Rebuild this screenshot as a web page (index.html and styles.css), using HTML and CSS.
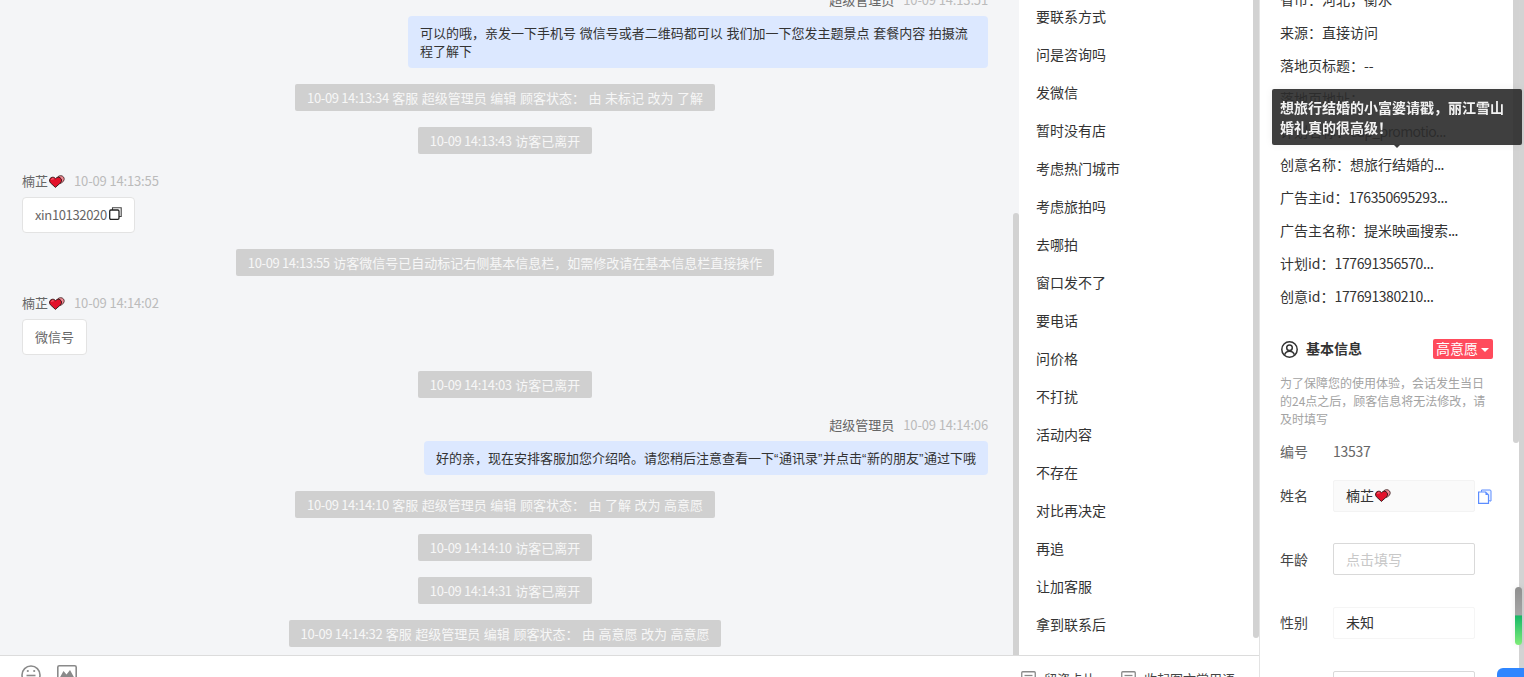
FILE: index.html
```html
<!DOCTYPE html>
<html lang="zh-CN">
<head>
<meta charset="utf-8">
<title>会话详情</title>
<link rel="stylesheet" href="styles.css">
</head>
<body>
<svg class="defs" width="0" height="0" aria-hidden="true">
  <symbol id="heart" viewBox="0 0 16 13">
    <path d="M8 3C9 .9 11.300 .2 13.200 1c2 .9 2.600 3.200 1.300 5L12 8.500 8 6z" fill="#f08a94" stroke="#4a2a2a" stroke-width=".9"/>
    <path d="M6.400 12.400 1.400 7.800C-.1 6 .4 3.500 2.200 2.600c1.600-.8 3.400-.3 4.400 1.100C7.600 2.300 9.400 1.800 11 2.700c1.800 1 2.100 3.500.6 5.100z" fill="#e3122b" stroke="#2e1616" stroke-width=".9"/>
    <path d="M2.500 4.500c.6-.7 1.400-.8 2.100-.6" fill="none" stroke="#f7a0a8" stroke-width=".9"/>
  </symbol>
</svg>
<div class="app">
  <div class="left">
    <div class="top">
      <section class="chat">
        <div class="feed">
          <div class="msg right">
            <div class="who"><span class="name">超级管理员</span><span class="time">10-09 14:13:51</span></div>
            <div class="bubble">可以的哦，亲发一下手机号 微信号或者二维码都可以 我们加一下您发主题景点 套餐内容 拍摄流程了解下</div>
          </div>
          <div class="notice"><span class="num">10-09 14:13:34</span> 客服 超级管理员 编辑 顾客状态： 由 未标记 改为 了解</div>
          <div class="notice"><span class="num">10-09 14:13:43</span> 访客已离开</div>
          <div class="msg">
            <div class="who"><span class="name">楠芷<svg class="heart"><use href="#heart"/></svg></span><span class="time">10-09 14:13:55</span></div>
            <div class="card"><span class="num">xin10132020</span><svg class="dup" viewBox="0 0 13 13"><path d="M3.500 3V.8h8.700v8.700H10" fill="none" stroke="#444" stroke-width="1.100"/><rect x=".7" y="3" width="9.300" height="9.300" rx="1.200" fill="none" stroke="#222" stroke-width="1.300"/></svg></div>
          </div>
          <div class="notice"><span class="num">10-09 14:13:55</span> 访客微信号已自动标记右侧基本信息栏，如需修改请在基本信息栏直接操作</div>
          <div class="msg">
            <div class="who"><span class="name">楠芷<svg class="heart"><use href="#heart"/></svg></span><span class="time">10-09 14:14:02</span></div>
            <div class="card">微信号</div>
          </div>
          <div class="notice"><span class="num">10-09 14:14:03</span> 访客已离开</div>
          <div class="msg right">
            <div class="who"><span class="name">超级管理员</span><span class="time">10-09 14:14:06</span></div>
            <div class="bubble">好的亲，现在安排客服加您介绍哈。请您稍后注意查看一下<span class="q">“</span>通讯录<span class="q">”</span>并点击<span class="q">“</span>新的朋友<span class="q">”</span>通过下哦</div>
          </div>
          <div class="notice"><span class="num">10-09 14:14:10</span> 客服 超级管理员 编辑 顾客状态： 由 了解 改为 高意愿</div>
          <div class="notice"><span class="num">10-09 14:14:10</span> 访客已离开</div>
          <div class="notice"><span class="num">10-09 14:14:31</span> 访客已离开</div>
          <div class="notice"><span class="num">10-09 14:14:32</span> 客服 超级管理员 编辑 顾客状态： 由 高意愿 改为 高意愿</div>
        </div>
        <div class="bar bar-chat"></div>
      </section>
      <aside class="phrases">
        <ul class="phrase-list">
          <li>要联系方式</li><li>问是咨询吗</li><li>发微信</li><li>暂时没有店</li><li>考虑热门城市</li><li>考虑旅拍吗</li><li>去哪拍</li><li>窗口发不了</li><li>要电话</li><li>问价格</li><li>不打扰</li><li>活动内容</li><li>不存在</li><li>对比再决定</li><li>再追</li><li>让加客服</li><li>拿到联系后</li>
        </ul>
        <div class="bar bar-phrases"></div>
      </aside>
    </div>
    <footer class="tools">
      <div class="tools-left">
        <svg class="tool-ico" viewBox="0 0 20 20"><circle cx="10" cy="10" r="9" fill="none" stroke="#8a8a8a" stroke-width="1.600"/><circle cx="6.800" cy="6" r="1.100" fill="#8a8a8a"/><circle cx="13.200" cy="6" r="1.100" fill="#8a8a8a"/><path d="M5.500 10.500h9" stroke="#8a8a8a" stroke-width="1.600"/></svg>
        <svg class="tool-ico" viewBox="0 0 20 20"><rect x=".8" y=".8" width="18.400" height="18.400" rx="1.500" fill="none" stroke="#8a8a8a" stroke-width="1.600"/><path d="M2 14l4.500-8 3 3.500L13 5l5 9z" fill="#8a8a8a"/></svg>
      </div>
      <div class="tools-right">
        <span class="tool-link"><svg class="tool-box" viewBox="0 0 15 15"><rect x=".75" y=".75" width="13.500" height="13.500" rx="1" fill="none" stroke="#8a8a8a" stroke-width="1.300"/><path d="M3.500 4.500h8" stroke="#8a8a8a" stroke-width="1.300"/></svg>留资卡片</span>
        <span class="tool-link"><svg class="tool-box" viewBox="0 0 15 15"><rect x=".75" y=".75" width="13.500" height="13.500" rx="1" fill="none" stroke="#8a8a8a" stroke-width="1.300"/><path d="M3.500 4.500h8" stroke="#8a8a8a" stroke-width="1.300"/></svg>收起图文常用语</span>
      </div>
    </footer>
  </div>
  <aside class="info">
    <div class="info-scroll">
      <ul class="facts">
        <li>省市：河北，衡水</li>
        <li>来源：直接访问</li>
        <li>落地页标题：--</li>
        <li>落地页地址：</li>
        <li>计划名称：<span class="latin">cdp_promotio...</span></li>
        <li>创意名称：想旅行结婚的<span class="dots">...</span></li>
        <li>广告主id：<span class="digits">176350695293...</span></li>
        <li>广告主名称：提米映画搜索<span class="dots">...</span></li>
        <li>计划id：<span class="digits">177691356570...</span></li>
        <li>创意id：<span class="digits">177691380210...</span></li>
      </ul>
      <div class="head">
        <svg class="head-ico" viewBox="0 0 17 17"><circle cx="8.500" cy="8.500" r="7.700" fill="none" stroke="#333" stroke-width="1.500"/><circle cx="8.500" cy="6.700" r="2.800" fill="none" stroke="#333" stroke-width="1.500"/><path d="M3.600 13.800c.8-2.400 2.700-3.500 4.900-3.500s4.100 1.100 4.900 3.500" fill="none" stroke="#333" stroke-width="1.500"/></svg>
        <h2 class="head-title">基本信息</h2>
        <span class="tag">高意愿<i class="caret"></i></span>
      </div>
      <p class="note">为了保障您的使用体验，会话发生当日的24点之后，顾客信息将无法修改，请及时填写</p>
      <div class="field plain"><span class="label">编号</span><span class="plain-val">13537</span></div>
      <div class="field tight"><span class="label dark">姓名</span><div class="input locked">楠芷<svg class="heart"><use href="#heart"/></svg></div>
        <svg class="copy" viewBox="0 0 14 15"><path d="M3.500 2.500V1H12c.6 0 1 .4 1 1v10h-1.500z" fill="#eef3ff" stroke="#5c8dff"/><path d="M.6 3h6.900l3 3v8.400H.6z" fill="#fff" stroke="#5c8dff" stroke-width="1.200"/><path d="M7.500 3v3h3z" fill="#5c8dff"/></svg>
      </div>
      <div class="field"><span class="label dark low">年龄</span><div class="input empty">点击填写</div></div>
      <div class="field"><span class="label dark">性别</span><div class="input soft">未知</div></div>
      <div class="field"><span class="label dark"></span><div class="input empty"></div></div>
    </div>
    <div class="bar bar-info"></div>
    <div class="tip">想旅行结婚的小富婆请戳，丽江雪山婚礼真的很高级！</div>
    <div class="meter"></div>
    <div class="fab"></div>
  </aside>
  <div class="edge"></div>
</div>
</body>
</html>
```
FILE: styles.css
```css
* { box-sizing: border-box; }
html, body { margin: 0; height: 100%; overflow: hidden; }
body { font: 13px/18px "Noto Sans CJK SC", "Noto Sans", sans-serif; color: #333; background: #fff; word-spacing: .8px; }
.defs { position: absolute; }
.app { display: flex; height: 677px; overflow: hidden; }
.left { width: 1259px; flex: none; display: flex; flex-direction: column; }
.top { flex: none; height: 655px; display: flex; }
.chat { width: 1019px; flex: none; position: relative; overflow: hidden; background: #f4f5f7; }
.feed { display: flex; flex-direction: column; align-items: center; gap: 16px; margin-top: -11px; padding: 0 31px 0 22px; }
.msg { align-self: stretch; display: flex; flex-direction: column; align-items: flex-start; gap: 5px; }
.msg.right { align-items: flex-end; }
.who { height: 22px; display: flex; align-items: center; gap: 9px; }
.name { color: #666; display: flex; align-items: center; }
.time { color: #bbb; letter-spacing: -.15px; word-spacing: 0; }
.num { letter-spacing: -.36px; word-spacing: 0; }
.heart { width: 16px; height: 13px; margin-left: 1px; flex: none; }
.q { font-family: "Liberation Sans", sans-serif; letter-spacing: .67px; line-height: 0; }
.bubble { max-width: 580px; padding: 8px 12px; background: #dce8ff; border-radius: 4px; color: #333; }
.card { height: 36px; display: flex; align-items: center; padding: 0 12px; background: #fff; border: 1px solid #e3e3e3; border-radius: 4px; color: #666; }
.dup { width: 13px; height: 13px; margin: -3px 0 0 2px; }
.notice { height: 27px; line-height: 27px; padding: 0 12px; background: #d0d0d0; border-radius: 2px; color: #f7f7f7; white-space: nowrap; word-spacing: .6px; }
.phrases { width: 240px; flex: none; position: relative; overflow: hidden; background: #fff; }
.phrase-list { list-style: none; margin: -3px 0 0; padding: 0 0 0 17px; font-size: 14px; }
.phrase-list li { height: 38px; line-height: 38px; }
.bar { position: absolute; width: 6px; background: #d2d2d2; border-radius: 3px; }
.bar-chat { right: 0; top: 213px; bottom: 0; border-radius: 3px 3px 0 0; }
.bar-phrases { left: 234px; top: -10px; height: 648px; }
.tools { flex: 1; min-height: 0; border-top: 1px solid #dcdcdc; overflow: hidden; background: #fff; display: flex; justify-content: space-between; padding: 9px 24px 0 21px; }
.tools-left { display: flex; gap: 16px; }
.tool-ico { width: 20px; height: 20px; }
.tools-right { display: flex; gap: 24px; padding-top: 6px; }
.tool-link { display: flex; gap: 8px; color: #444; line-height: 15px; }
.tool-link:first-child { margin-right: 1px; }
.tool-box { width: 15px; height: 15px; }
.info { flex: 1; position: relative; border-left: 1px solid #e3e3e3; background: #fff; }
.info-scroll { height: 677px; overflow: hidden; padding: 0 31px 0 20px; font-size: 14px; }
.facts { list-style: none; margin: -17px 0 0; padding: 0; }
.facts li { height: 33px; line-height: 33px; white-space: nowrap; }
.digits { letter-spacing: -.4px; }
.latin { letter-spacing: -.6px; }
.dots { letter-spacing: -.6px; }
.head { display: flex; align-items: center; height: 20px; margin-top: 26px; }
.head-ico { width: 17px; height: 17px; margin: 1px 8px 0 1px; flex: none; }
.head-title { margin: -2px 0 0; font-size: 14px; font-weight: 700; color: #333; line-height: 20px; }
.tag { margin-left: auto; width: 60px; height: 20px; display: flex; align-items: center; padding: 0 0 2px 3px; background: #ff4b5c; color: #fff; border-radius: 2px; font-size: 14px; line-height: 18px; white-space: nowrap; }
.caret { margin: 3px 0 0 3px; border: 4px solid transparent; border-top-color: #fff; border-bottom: 0; }
.note { margin: 15px 0 0; font-size: 12px; line-height: 18px; color: #a3a3a3; }
.field { display: flex; align-items: center; height: 32px; margin-bottom: 32px; }
.field.tight { margin-bottom: 31px; }
.field.plain { height: 18px; margin: 15px 0 19px; }
.label { width: 53px; flex: none; color: #666; padding-bottom: 2px; }
.label.dark { color: #444; }
.label.low { padding-bottom: 0; }
.plain-val { color: #666; letter-spacing: -.3px; padding-bottom: 2px; }
.input { width: 142px; height: 32px; padding: 0 12px; border-radius: 2px; border: 1px solid #d9d9d9; display: flex; align-items: center; flex: none; }
.input.locked { background: #fafafa; border-color: #f3f3f3; padding-bottom: 2px; }
.input.soft { border-color: #f5f5f5; padding-bottom: 2px; }
.input.empty { color: #c8c8c8; }
.copy { width: 14px; height: 15px; margin-left: 3px; flex: none; }
.bar-info { left: 253px; top: -10px; height: 453px; }
.tip { position: absolute; left: 12px; top: 89px; width: 250px; padding: 8px; line-height: 20px; font-size: 14px; font-weight: 700; color: #f2f2f2; background: rgba(44, 44, 44, .91); border-radius: 2px; box-shadow: 0 0 8px rgba(0, 0, 0, .06); z-index: 2; }
.tip::after { content: ""; position: absolute; left: 121px; bottom: -3px; border: 4px solid transparent; border-top-color: #3c3c3c; border-bottom: 0; }
.meter { position: absolute; left: 255px; top: 587px; width: 7px; height: 58px; border-radius: 4px; background: linear-gradient(#8f8f8f, #a5a5a5 48%, #17b866 50%, #7fec78); box-shadow: 0 0 6px rgba(0, 0, 0, .08); z-index: 3; }
.fab { position: absolute; left: 237px; top: 668px; width: 40px; height: 20px; border-radius: 6px 0 0 0; background: #2f86ff; z-index: 3; }
.edge { position: fixed; right: 0; top: 0; bottom: 0; width: 5px; background: #d3d3d3; z-index: 1; }
```
